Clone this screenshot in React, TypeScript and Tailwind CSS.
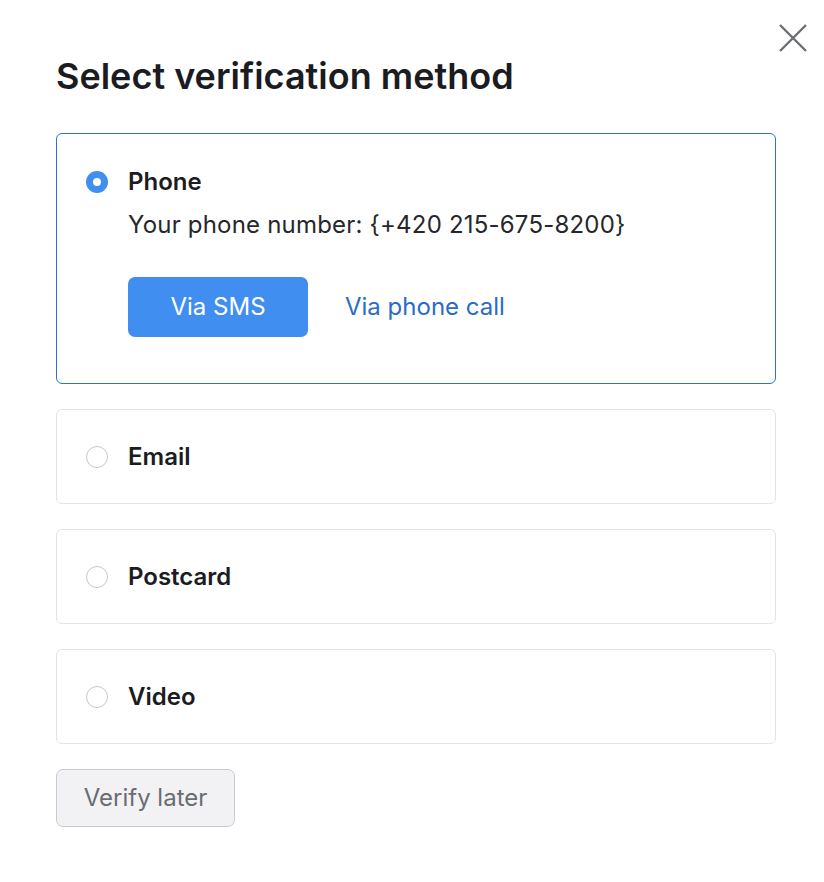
import { useState } from "react";

const methods = ["Phone", "Email", "Postcard", "Video"];

function Radio({ checked }: { checked: boolean }) {
  return checked ? (
    <span className="flex h-[22px] w-[22px] shrink-0 items-center justify-center rounded-full bg-[#3f8ef0]">
      <span className="h-[8px] w-[8px] rounded-full bg-white" />
    </span>
  ) : (
    <span className="h-[22px] w-[22px] shrink-0 rounded-full border-[1.5px] border-[#c5c7cd] bg-white" />
  );
}

export default function App() {
  const [selected, setSelected] = useState("Phone");

  return (
    <div className="relative h-[882px] w-[824px] bg-white font-['Inter',sans-serif] text-[#1b1c21]">
      <button type="button" className="absolute right-[15px] top-[22px] text-[#6b6e76]" aria-label="Close">
        <svg width="32" height="32" viewBox="0 0 32 32" fill="none" stroke="currentColor" strokeWidth="2.4">
          <path d="M3 3 L29 29 M29 3 L3 29" />
        </svg>
      </button>

      <div className="px-[56px] pt-[54px]">
        <h1 className="text-[36px] font-semibold leading-[44px]">Select verification method</h1>

        <div className="mt-[35px] flex w-[720px] flex-col gap-[25px]">
          {methods.map((m) => {
            const active = selected === m;
            return (
              <div
                key={m}
                onClick={() => setSelected(m)}
                className={
                  active
                    ? "rounded-[6px] border border-[#2f72d2] px-[29px] pb-[46px] pt-[33px]"
                    : "cursor-pointer rounded-[6px] border border-[#e3e4e8] px-[29px] py-[32px]"
                }
              >
                <div className="flex items-center gap-[20px]">
                  <Radio checked={active} />
                  <span className="text-[24px] font-semibold leading-[29px]">{m}</span>
                </div>
                {active && m === "Phone" ? (
                  <div className="pl-[42px]">
                    <p className="mt-[14px] text-[24px] leading-[29px] tracking-[0.2px] text-[#26272c]">
                      Your phone number: {"{+420 215-675-8200}"}
                    </p>
                    <div className="mt-[38px] flex items-center gap-[37px]">
                      <button
                        type="button"
                        className="h-[60px] w-[180px] rounded-[7px] bg-[#3f8ef0] text-[24px] text-white"
                      >
                        Via SMS
                      </button>
                      <button type="button" className="text-[24px] text-[#2b6cc4]">
                        Via phone call
                      </button>
                    </div>
                  </div>
                ) : null}
              </div>
            );
          })}
        </div>

        <button
          type="button"
          className="mt-[25px] h-[58px] w-[179px] rounded-[7px] border border-[#c9cbd1] bg-[#f2f2f4] text-[24px] text-[#6a6c73]"
        >
          Verify later
        </button>
      </div>
    </div>
  );
}
